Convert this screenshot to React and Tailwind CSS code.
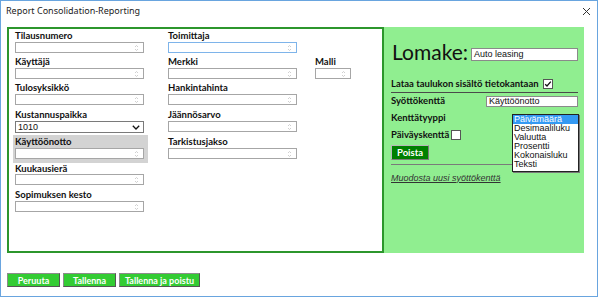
import React from "react";

const Spinner = () => (
  <svg width="5" height="8" viewBox="0 0 5 8" className="absolute right-[4px] top-[1px]">
    <path d="M1 3 L2.5 1.5 L4 3" stroke="#c4c4c4" strokeWidth="0.8" fill="none" />
    <path d="M1 5 L2.5 6.5 L4 5" stroke="#c4c4c4" strokeWidth="0.8" fill="none" />
  </svg>
);

const NumInput = ({ wide = true, focus = false }) => (
  <div
    className={`relative h-[11px] bg-white border ${wide ? "w-[129px]" : "w-[36px]"} ${
      focus ? "border-[#7eb4ea]" : "border-[#a6a6a6]"
    }`}
  >
    <Spinner />
  </div>
);

const Label = ({ children, h = "h-[13px]" }) => (
  <div className={`${h} flex items-center text-[9.5px] font-bold text-[#111] leading-none`}>{children}</div>
);

const Field = ({ label, mt = "", focus, wide = true, lh }) => (
  <div className={mt}>
    <Label h={lh}>{label}</Label>
    <NumInput wide={wide} focus={focus} />
  </div>
);

const Checkbox = ({ checked }) => (
  <div className="w-[10px] h-[10px] bg-white border border-[#555] flex items-center justify-center">
    {checked && (
      <svg width="8" height="8" viewBox="0 0 8 8">
        <path d="M1.2 4.2 L3 6 L6.8 1.6" stroke="#111" strokeWidth="1.3" fill="none" />
      </svg>
    )}
  </div>
);

const options = ["Päivämäärä", "Desimaaliluku", "Valuutta", "Prosentti", "Kokonaisluku", "Teksti"];

export default function App() {
  return (
    <div className="w-[598px] h-[297px] bg-white border border-[#69a5df] flex flex-col font-['Lato',sans-serif] overflow-hidden">
      {/* title bar */}
      <div className="h-[26px] flex items-start justify-between pl-[5px] pr-[5px]">
        <div className="pt-[3px] text-[9px] leading-[13px] text-[#222] font-['Noto_Sans',sans-serif]">
          Report Consolidation-Reporting
        </div>
        <svg width="9" height="9" viewBox="0 0 9 9" className="mt-[6px] mr-[1px]">
          <path d="M1 1 L8 8 M8 1 L1 8" stroke="#333" strokeWidth="1" />
        </svg>
      </div>

      {/* main */}
      <div className="flex ml-[6px] h-[226px]">
        <div className="w-[377px] border-2 border-[#2c962c] flex pl-[6px]">
          <div className="w-[153px] flex flex-col">
            <Field label="Tilausnumero" />
            <Field label="Käyttäjä" mt="mt-[2px]" />
            <Field label="Tulosyksikkö" mt="mt-[2px]" />
            <div className="mt-[3px]">
              <Label>Kustannuspaikka</Label>
              <div className="w-[129px] h-[12px] bg-white border border-[#7a7a7a] flex items-center justify-between pl-[2px] pr-[3px]">
                <span className="text-[9px] leading-none font-['Liberation_Sans',sans-serif] text-[#111]">1010</span>
                <svg width="8" height="5" viewBox="0 0 8 5">
                  <path d="M0.8 0.8 L4 4 L7.2 0.8" stroke="#111" strokeWidth="1.3" fill="none" />
                </svg>
              </div>
            </div>
            <div className="mt-[2px] -ml-[2px] w-[135px] bg-[#d3d3d3] pl-[2px] pb-[4px]">
              <Label>Käyttöönotto</Label>
              <NumInput />
            </div>
            <Field label="Kuukausierä" lh="h-[11px]" />
            <Field label="Sopimuksen kesto" mt="mt-[3px]" />
          </div>

          <div className="flex flex-col">
            <Field label="Toimittaja" focus />
            <div className="flex mt-[2px]">
              <Field label="Merkki" />
              <div className="ml-[18px]">
                <Field label="Malli" wide={false} />
              </div>
            </div>
            <Field label="Hankintahinta" mt="mt-[2px]" />
            <Field label="Jäännösarvo" mt="mt-[3px]" />
            <Field label="Tarkistusjakso" mt="mt-[3px]" />
          </div>
        </div>

        {/* right panel */}
        <div className="relative w-[200px] bg-[#90ee90] pl-[7px] flex flex-col">
          <div className="flex items-start pt-[12px]">
            <span className="text-[21px] leading-[25px] text-[#111] pl-[1px]">Lomake:</span>
            <div className="ml-[3px] mt-[9px] w-[107px] h-[13px] bg-white border border-[#8a8a8a] flex items-center pl-[2px]">
              <span className="text-[9px] leading-none font-['Liberation_Sans',sans-serif] text-[#111]">Auto leasing</span>
            </div>
          </div>
          <div className="mt-[13px] h-[14px] flex items-center">
            <span className="text-[9.5px] font-bold leading-none text-[#111]">Lataa taulukon sisältö tietokantaan</span>
            <div className="ml-[4px]">
              <Checkbox checked />
            </div>
          </div>
          <div className="mt-[1px] w-[187px] h-[1px] bg-[#4a4a4a]" />
          <div className="mt-[1px] h-[14px] flex items-center justify-between w-[187px]">
            <span className="text-[9.5px] font-bold leading-none text-[#111]">Syöttökenttä</span>
            <div className="w-[92px] h-[11px] bg-white border border-[#8a8a8a] flex items-center pl-[2px]">
              <span className="text-[9px] leading-none font-['Liberation_Sans',sans-serif] text-[#111]">Käyttöönotto</span>
            </div>
          </div>
          <div className="mt-[3px] h-[14px] flex items-center">
            <span className="text-[9.5px] font-bold leading-none text-[#111]">Kenttätyyppi</span>
          </div>
          <div className="mt-[3px] h-[14px] flex items-center">
            <span className="text-[9.5px] font-bold leading-none text-[#111]">Päiväyskenttä</span>
            <div className="ml-[2px]">
              <Checkbox />
            </div>
          </div>
          <button className="mt-[3px] w-[38px] h-[15px] bg-[#008000] border border-[#b8b8b8] border-r-[#7c7c7c] border-b-[#7c7c7c] text-white text-[9.5px] font-bold leading-none flex items-center justify-center">
            Poista
          </button>
          <div className="mt-[4px] w-[121px] h-[1px] bg-[#7a7a7a]" />
          <div className="mt-[6px] h-[14px] flex items-center">
            <span className="text-[9px] italic underline leading-none text-[#333] font-['Liberation_Sans',sans-serif]">
              Muodosta uusi syöttökenttä
            </span>
          </div>

          {/* open listbox */}
          <div className="absolute left-[128px] top-[87px] w-[67px] h-[58px] bg-white border border-[#222] shadow-[1px_1px_0_#777] font-['Liberation_Sans',sans-serif]">
            {options.map((o, i) => (
              <div
                key={o}
                className={`h-[9px] flex items-center pl-[1px] text-[9px] leading-none ${
                  i === 0 ? "bg-[#3399f3] text-white" : "text-[#111]"
                }`}
              >
                {o}
              </div>
            ))}
          </div>
        </div>
      </div>

      {/* bottom buttons */}
      <div className="mt-[20px] ml-[6px] flex gap-[3px]">
        {[
          ["Peruuta", "w-[53px]"],
          ["Tallenna", "w-[53px]"],
          ["Tallenna ja poistu", "w-[81px]"],
        ].map(([t, w]) => (
          <button
            key={t}
            className={`${w} h-[14px] bg-[#33cc33] border border-[#8c8c8c] border-r-[#555] border-b-[#555] text-white text-[9px] font-bold leading-none flex items-center justify-center`}
          >
            {t}
          </button>
        ))}
      </div>
    </div>
  );
}
